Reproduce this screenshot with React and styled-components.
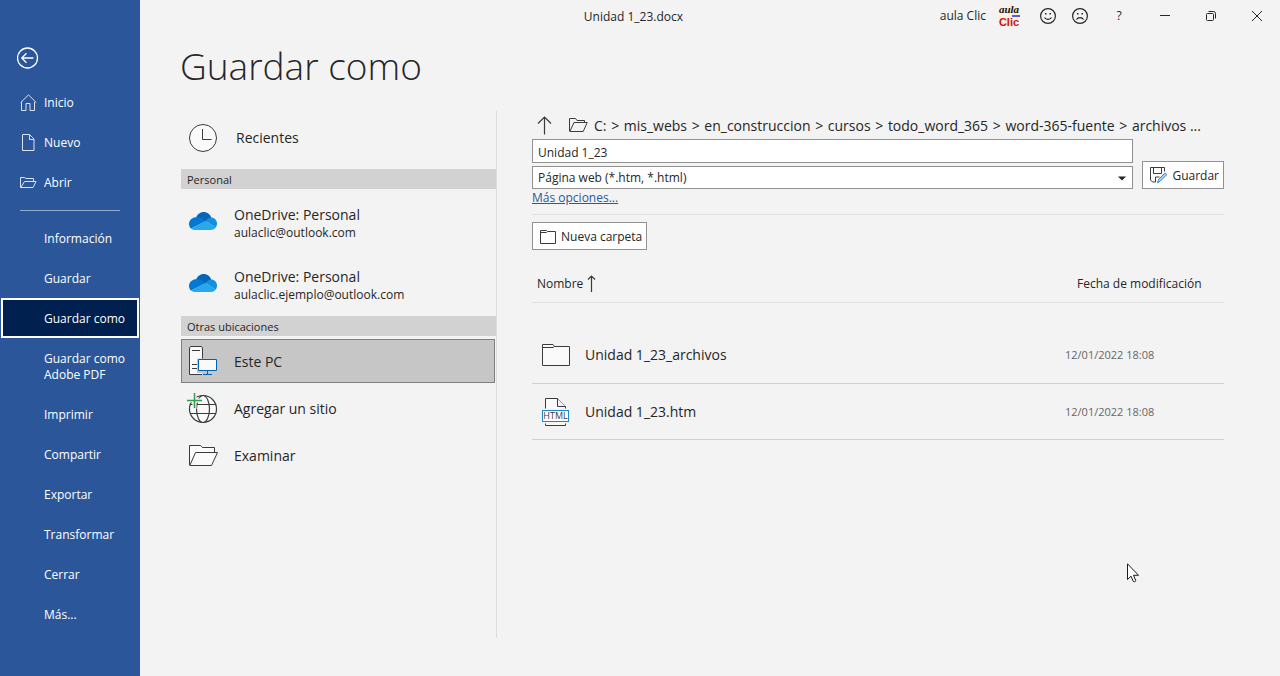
import { Fragment, useState } from 'react';
import styled, { createGlobalStyle } from 'styled-components';

const GlobalStyle = createGlobalStyle`
    * {
        box-sizing: border-box;
    }

    body {
        margin: 0;
        background-color: #f3f3f3;
        color: #262626;
        font-family: "Open Sans", "Noto Sans", sans-serif;
        font-size: 12px;
        line-height: 16px;
    }

    button, input, select {
        font: inherit;
        color: inherit;
    }

    svg {
        display: block;
        flex: none;
    }
`;

const Page = styled.div`
    display: flex;
    min-height: 100vh;
`;

const Sidebar = styled.nav`
    width: 140px;
    flex: none;
    padding-top: 44px;
    background-color: #2b579a;
    color: #fff;
`;

const BackButton = styled.button`
    display: block;
    margin: 0 0 10px 14px;
    padding: 3px;
    border: 0;
    background: none;
`;

const MenuItem = styled.button`
    display: flex;
    align-items: center;
    width: 138px;
    min-height: 40px;
    margin: 0 1px;
    padding: 11px 10px 9px 41px;
    border: 2px solid ${props => props.$active ? '#fff' : 'transparent'};
    background-color: ${props => props.$active ? '#002050' : 'transparent'};
    text-align: left;
`;

const IconMenuItem = styled(MenuItem)`
    gap: 7px;
    padding: 9px 10px 8px 17px;
`;

const Divider = styled.hr`
    width: 100px;
    height: 1px;
    margin: 8px 20px 7px;
    border: 0;
    background-color: #8fabc9;
`;

const Main = styled.main`
    flex: 1;
    min-width: 0;
    display: flex;
    flex-direction: column;
`;

const TitleBar = styled.header`
    display: flex;
    align-items: center;
    height: 32px;
`;

const DocName = styled.div`
    flex: 1;
    padding: 2px 0 0 187px;
    text-align: center;
`;

const User = styled.button`
    display: flex;
    align-items: center;
    gap: 11px;
    padding: 0 11px 0 0;
    border: 0;
    background: none;
`;

const BarButton = styled.button`
    display: flex;
    align-items: center;
    justify-content: center;
    width: ${props => props.$small ? '32px' : '46px'};
    height: 30px;
    padding: 0;
    border: 0;
    background: none;
`;

const Heading = styled.h1`
    margin: 0 0 17px 40px;
    padding-top: 6px;
    font-size: 37px;
    font-weight: 300;
    line-height: 56px;
`;

const Columns = styled.div`
    display: flex;
    flex: 1;
    padding: 0 56px 38px 41px;
`;

const Places = styled.section`
    width: 316px;
    flex: none;
    border-right: 1px solid #dcdcdc;
`;

const GroupTitle = styled.h2`
    margin: 0 0 3px;
    padding: 3px 6px 1px;
    background-color: #d2d2d2;
    font-size: 11px;
    font-weight: 400;
    line-height: 16px;
`;

const Place = styled.button`
    display: flex;
    align-items: center;
    gap: 16px;
    width: calc(100% - 1px);
    height: 44px;
    margin-bottom: 3px;
    padding: 0 7px;
    border: 1px solid ${props => props.$active ? '#7f7f7f' : 'transparent'};
    background-color: ${props => props.$active ? '#c6c6c6' : 'transparent'};
    text-align: left;
`;

const AccountPlace = styled(Place)`
    height: 62px;
    margin-bottom: 0;
`;

const RecentPlace = styled(Place)`
    gap: 18px;
    margin: 5px 0 9px;
`;

const IconSlot = styled.span`
    display: flex;
    justify-content: flex-end;
    width: 29px;
    padding-right: ${props => props.$narrow ? '1px' : '0'};
    flex: none;
`;

const CloudSlot = styled(IconSlot)`
    padding-bottom: 4px;
`;

const PlaceName = styled.span`
    display: block;
    font-size: 14px;
    line-height: 20px;
`;

const PlaceLabel = styled(PlaceName)`
    padding-top: 2px;
`;

const Files = styled.section`
    flex: 1;
    min-width: 0;
    margin-left: 35px;
`;

const PathRow = styled.div`
    display: flex;
    align-items: center;
    gap: 6px;
    height: 28px;
    font-size: 14px;
`;

const UpButton = styled.button`
    margin-right: 11px;
    padding: 0 0 0 5px;
    border: 0;
    background: none;
`;

const PathText = styled.div`
    padding-top: 2px;
    white-space: nowrap;
    overflow: hidden;
    text-overflow: ellipsis;
    line-height: 20px;
`;

const Separator = styled.span`
    padding: 0 1px;
`;

const SaveRow = styled.form`
    display: flex;
    align-items: flex-end;
    gap: 9px;
`;

const Fields = styled.div`
    flex: 1;
    display: flex;
    flex-direction: column;
    gap: 3px;
`;

const NameInput = styled.input`
    width: 100%;
    height: 24px;
    padding: 2px 5px 0;
    border: 1px solid #919191;
    background-color: #fff;
`;

const SelectBox = styled.div`
    position: relative;

    svg {
        position: absolute;
        top: 10px;
        right: 7px;
        pointer-events: none;
    }
`;

const TypeSelect = styled.select`
    display: block;
    width: 100%;
    height: 23px;
    padding: 1px 5px 0;
    border: 1px solid #919191;
    border-radius: 0;
    background-color: #fff;
    appearance: none;
`;

const Button = styled.button`
    display: flex;
    align-items: center;
    gap: 5px;
    height: 28px;
    padding: 1px 4px 0 7px;
    border: 1px solid #919191;
    background-color: #fff;
    white-space: nowrap;
`;

const MoreLink = styled.a`
    display: inline-block;
    padding-top: 1px;
    color: #2b579a;
`;

const Toolbar = styled.div`
    margin-top: 8px;
    padding-top: 7px;
    border-top: 1px solid #e1e1e1;
`;

const FileTable = styled.table`
    width: 100%;
    margin-top: 14px;
    border-collapse: collapse;
    text-align: left;
`;

const HeadCell = styled.th`
    width: ${props => props.$date ? '159px' : 'auto'};
    height: 38px;
    padding: 2px 0 0 ${props => props.$date ? '12px' : '5px'};
    border-bottom: 1px solid #e1e1e1;
    font-weight: 400;
`;

const SortButton = styled.button`
    display: flex;
    align-items: center;
    gap: 4px;
    padding: 0;
    border: 0;
    background: none;
`;

const Spacer = styled.tbody`
    td {
        height: 25px;
        padding: 0;
    }
`;

const Cell = styled.td`
    height: 56px;
    padding: 1px 0 0;
    border-bottom: 1px solid #cfcfcf;
    color: ${props => props.$date ? '#666' : 'inherit'};
    font-size: ${props => props.$date ? '11px' : '14px'};
`;

const FileName = styled.div`
    display: flex;
    align-items: center;
    gap: 15px;
    padding-left: 10px;
`;

const Pointer = styled.svg`
    position: absolute;
    left: 1127px;
    top: 563px;
`;

const line = { fill: 'none', stroke: 'currentColor', strokeWidth: 1 };

const BackIcon = () => (
    <svg width="22" height="22" viewBox="0 0 22 22" {...line} stroke="#fff" strokeWidth="1.3">
        <circle cx="10.500" cy="11" r="10" />
        <path d="M16.500 11H5M9.500 6.300L4.800 11l4.700 4.700" />
    </svg>
);

const HomeIcon = () => (
    <svg width="17" height="17" viewBox="0 0 17 17" {...line} stroke="#dde3ec">
        <path d="M.7 8.600L8.500 .9l7.800 7.700M1.500 8v8.500h4.500V9.500h4v7h4.500V8" />
    </svg>
);

const PageIcon = () => (
    <svg width="17" height="17" viewBox="0 0 17 17" {...line} stroke="#dde3ec">
        <path d="M2.500 .5h7l4.500 4.500v11.500H2.500zM9.500 .5v5h4.500" />
    </svg>
);

const OpenIcon = () => (
    <svg width="17" height="17" viewBox="0 0 17 17" {...line} stroke="#dde3ec">
        <path d="M.5 13.500V3.500h4l1.500 1h7.500v3M.8 13.500L4.500 7.500h11.500l-3 6z" />
    </svg>
);

const ClockIcon = () => (
    <svg width="28" height="28" viewBox="0 0 28 28" {...line} stroke="#3b3b3b">
        <circle cx="14" cy="14" r="13.5" fill="#fafafa" />
        <path d="M13.500 5v10.500h9" />
    </svg>
);

const CloudIcon = () => (
    <svg width="28" height="18" viewBox="0 0 28 18">
        <path fill="#0364b8" d="M7 5.500C8.600 1.900 11.500 0 14.700 0c3.600 0 6.500 2.300 7.500 5.700L17 10 8 6z" />
        <path fill="#0078d4" d="M8.200 5c1.500 0 2.700.4 3.800 1.100l5 3L2 16.500C.8 15.400 0 13.700 0 11.900 0 8 3.500 5 8.200 5z" />
        <path fill="#1490df" d="M22 5.600c3.400 0 6 2.700 6 6.100 0 1.400-.4 2.700-1.200 3.700L16.500 9c1.700-2.200 3.200-3.400 5.500-3.400z" />
        <path fill="#28a8ea" d="M16.500 8.900l10.400 6.400C25.800 17 24 18 22 18H6c-1.600 0-3-.6-4.100-1.500z" />
    </svg>
);

const PcIcon = () => (
    <svg width="28" height="30" viewBox="0 0 28 30" {...line} stroke="#3b3b3b">
        <path fill="#fafafa" d="M.5 28.500V2l1-1.500h11l1 1.500v26.500z" />
        <path d="M3 4.500h8M3 18.500h5M3 22.500h5" />
        <path fill="#c6c6c6" stroke="none" d="M8 12.500h7V30H13v-3H8z" />
        <path fill="#fafafa" stroke="#0063b1" d="M9.500 13.500h18v11h-18zM18.500 24.500v4M14 28.500h9" />
    </svg>
);

const GlobeIcon = () => (
    <svg width="31" height="31" viewBox="0 0 31 31" {...line} stroke="#3b3b3b" strokeWidth="1.200">
        <circle cx="16" cy="16" r="13.500" fill="#fafafa" />
        <ellipse cx="16" cy="16" rx="6.500" ry="13.500" />
        <path d="M4 11.500h24.500M3 20.500h26" />
        <path stroke="#f3f3f3" strokeWidth="4" d="M7.500 0v16M0 7.500h16" />
        <path stroke="#2f9e4f" strokeWidth="1.500" d="M7.500 0v15M0 7.500h15" />
    </svg>
);

const BrowseIcon = () => (
    <svg width="29" height="21" viewBox="0 0 29 21" {...line} stroke="#3b3b3b">
        <path fill="#fafafa" d="M.5 20V.5h11l2 2h12v5" />
        <path fill="#fafafa" d="M.8 20.500L6.500 7.500h22l-6 13z" />
    </svg>
);

const SmallOpenIcon = () => (
    <svg width="19" height="14" viewBox="0 0 19 14" {...line} stroke="#3b3b3b">
        <path d="M.5 13V.5h6l1.500 2h7.500v2M.8 13.500L5 4.500h13.200l-4 9z" />
    </svg>
);

const UpIcon = () => (
    <svg width="15" height="19" viewBox="0 0 15 19" {...line} stroke="#3b3b3b" strokeWidth="1.200">
        <path d="M7.500 18.500V1M1 7.500L7.500 1 14 7.500" />
    </svg>
);

const SortIcon = () => (
    <svg width="9" height="17" viewBox="0 0 9 17" {...line} stroke="#3b3b3b" strokeWidth="1.200">
        <path d="M4.500 17V1M1 4.500L4.500 1 8 4.500" />
    </svg>
);

const SaveIcon = () => (
    <svg width="17" height="17" viewBox="0 0 17 17" {...line} stroke="#3b3b3b">
        <path d="M14.500 4.500V.5H.5v12.500l2 2h3M3.500 .5v6h8v-6M5.500 15v-5h4" />
        <path stroke="#2b88d8" fill="#a9d3f2" d="M7.500 15.800l1-3.300 6-6c1.200-.8 2.500.5 1.700 1.700l-6 6z" />
    </svg>
);

const NewFolderIcon = () => (
    <svg width="16" height="14" viewBox="0 0 16 14" {...line} stroke="#3b3b3b">
        <path d="M.5 13.500V.5h6l1 1h8v12zM.5 2.500h6l1-1" />
    </svg>
);

const FolderIcon = () => (
    <svg width="28" height="22" viewBox="0 0 28 22" {...line} stroke="#3b3b3b">
        <path fill="#fafafa" d="M.5 21.500V.5h10.500l1.500 2h15v19zM.5 3.500h10.500l1.500-1" />
    </svg>
);

const HtmlIcon = () => (
    <svg width="28" height="28" viewBox="0 0 28 28" {...line} stroke="#3b3b3b">
        <path fill="#fafafa" d="M3.500 27.500V.5h12l8 8v19z" />
        <path fill="#f3f3f3" d="M15.500 .5v8h8" />
        <path stroke="#f3f3f3" strokeWidth="2" d="M3 11.500h22M3 24.500h22" />
        <rect x=".5" y="12.500" width="26" height="11" fill="#fff" stroke="#1e88c9" />
        <text x="13.500" y="21" textAnchor="middle" fontSize="9" fill="#3b3b3b" stroke="none">HTML</text>
    </svg>
);

const Logo = () => (
    <svg width="24" height="26" viewBox="0 0 24 26">
        <circle cx="12" cy="12.500" r="11.500" fill="#fdf0e2" />
        <path stroke="#5560d0" strokeWidth="2" d="M15 13h8" />
        <text x="12" y="10" textAnchor="middle" fontSize="11" fontWeight="700" fontStyle="italic" fontFamily="Liberation Serif, serif" fill="#111">aula</text>
        <text x="12" y="23" textAnchor="middle" fontSize="11" fontWeight="700" fontFamily="Liberation Sans, sans-serif" fill="#c41616">Clic</text>
    </svg>
);

const FaceIcon = ({ sad }) => (
    <svg width="16" height="16" viewBox="0 0 16 16" {...line} strokeWidth="1.200">
        <circle cx="8" cy="8" r="7.400" />
        <path d={sad ? 'M4.500 11.500c1.500-2.400 5.500-2.400 7 0' : 'M4.500 9.500c1.500 2.400 5.500 2.400 7 0'} />
        <path fill="currentColor" stroke="none" d="M5 5h1.500v1.500H5zM9.500 5H11v1.500H9.500z" />
    </svg>
);

const MinimizeIcon = () => <svg width="10" height="10" viewBox="0 0 10 10" {...line}><path d="M0 4.500h10" /></svg>;

const RestoreIcon = () => (
    <svg width="10" height="10" viewBox="0 0 10 10" {...line}>
        <rect x=".5" y="2.500" width="7" height="7" rx="1" />
        <path d="M2.500 .5h5a2 2 0 0 1 2 2v5" />
    </svg>
);

const CloseIcon = () => <svg width="10" height="10" viewBox="0 0 10 10" {...line}><path d="M0 0l10 10M10 0L0 10" /></svg>;

const TOP_MENU = [
    { name: 'Inicio', Icon: HomeIcon },
    { name: 'Nuevo', Icon: PageIcon },
    { name: 'Abrir', Icon: OpenIcon }
];

const MENU = [
    'Información', 'Guardar', 'Guardar como', 'Guardar como Adobe PDF', 'Imprimir',
    'Compartir', 'Exportar', 'Transformar', 'Cerrar', 'Más...'
];

const ACCOUNTS = ['aulaclic@outlook.com', 'aulaclic.ejemplo@outlook.com'];

const PLACES = [
    { name: 'Este PC', Icon: PcIcon, narrow: true },
    { name: 'Agregar un sitio', Icon: GlobeIcon },
    { name: 'Examinar', Icon: BrowseIcon }
];

const PATH = ['C:', 'mis_webs', 'en_construccion', 'cursos', 'todo_word_365', 'word-365-fuente', 'archivos ...'];

const FILES = [
    { name: 'Unidad 1_23_archivos', date: '12/01/2022 18:08', Icon: FolderIcon },
    { name: 'Unidad 1_23.htm', date: '12/01/2022 18:08', Icon: HtmlIcon }
];

function App() {

    const [page, setPage] = useState('Guardar como');
    const [place, setPlace] = useState('Este PC');
    const [fileName, setFileName] = useState('Unidad 1_23');

    return (
        <Page>
            <GlobalStyle />
            <Sidebar>
                <BackButton aria-label="Atrás"><BackIcon /></BackButton>
                {TOP_MENU.map(({ name, Icon }) => (
                    <IconMenuItem key={name}><Icon />{name}</IconMenuItem>
                ))}
                <Divider />
                {MENU.map(name => (
                    <MenuItem key={name} $active={name === page} onClick={() => setPage(name)}>{name}</MenuItem>
                ))}
            </Sidebar>
            <Main>
                <TitleBar>
                    <DocName>Unidad 1_23.docx</DocName>
                    <User>aula Clic<Logo /></User>
                    <BarButton $small aria-label="Me gusta"><FaceIcon /></BarButton>
                    <BarButton $small aria-label="No me gusta"><FaceIcon sad /></BarButton>
                    <BarButton>?</BarButton>
                    <BarButton aria-label="Minimizar"><MinimizeIcon /></BarButton>
                    <BarButton aria-label="Restaurar"><RestoreIcon /></BarButton>
                    <BarButton aria-label="Cerrar ventana"><CloseIcon /></BarButton>
                </TitleBar>
                <Heading>Guardar como</Heading>
                <Columns>
                    <Places>
                        <RecentPlace>
                            <IconSlot $narrow><ClockIcon /></IconSlot>
                            <PlaceName>Recientes</PlaceName>
                        </RecentPlace>
                        <GroupTitle>Personal</GroupTitle>
                        {ACCOUNTS.map(mail => (
                            <AccountPlace key={mail}>
                                <CloudSlot $narrow><CloudIcon /></CloudSlot>
                                <span><PlaceName>OneDrive: Personal</PlaceName>{mail}</span>
                            </AccountPlace>
                        ))}
                        <GroupTitle>Otras ubicaciones</GroupTitle>
                        {PLACES.map(({ name, Icon, narrow }) => (
                            <Place key={name} $active={name === place} onClick={() => setPlace(name)}>
                                <IconSlot $narrow={narrow}><Icon /></IconSlot>
                                <PlaceLabel>{name}</PlaceLabel>
                            </Place>
                        ))}
                    </Places>
                    <Files>
                        <PathRow>
                            <UpButton aria-label="Subir un nivel"><UpIcon /></UpButton>
                            <SmallOpenIcon />
                            <PathText>
                                {PATH.map((folder, index) => (
                                    <Fragment key={folder}>
                                        {index > 0 && <Separator> &gt; </Separator>}
                                        {folder}
                                    </Fragment>
                                ))}
                            </PathText>
                        </PathRow>
                        <SaveRow onSubmit={event => event.preventDefault()}>
                            <Fields>
                                <NameInput
                                    aria-label="Nombre de archivo"
                                    value={fileName}
                                    onChange={event => setFileName(event.target.value)}
                                />
                                <SelectBox>
                                    <TypeSelect aria-label="Tipo de archivo">
                                        <option>Página web (*.htm, *.html)</option>
                                    </TypeSelect>
                                    <svg width="8" height="5" viewBox="0 0 8 5"><path fill="#262626" d="M0 .5h8L4 4.500z" /></svg>
                                </SelectBox>
                            </Fields>
                            <Button><SaveIcon />Guardar</Button>
                        </SaveRow>
                        <MoreLink href="#opciones">Más opciones...</MoreLink>
                        <Toolbar>
                            <Button><NewFolderIcon />Nueva carpeta</Button>
                        </Toolbar>
                        <FileTable>
                            <thead>
                                <tr>
                                    <HeadCell><SortButton>Nombre<SortIcon /></SortButton></HeadCell>
                                    <HeadCell $date>Fecha de modificación</HeadCell>
                                </tr>
                            </thead>
                            <Spacer><tr><td colSpan={2} /></tr></Spacer>
                            <tbody>
                                {FILES.map(({ name, date, Icon }) => (
                                    <tr key={name}>
                                        <Cell><FileName><Icon />{name}</FileName></Cell>
                                        <Cell $date>{date}</Cell>
                                    </tr>
                                ))}
                            </tbody>
                        </FileTable>
                    </Files>
                </Columns>
            </Main>
            <Pointer width="13" height="20" viewBox="0 0 13 20">
                <path fill="#fff" stroke="#1b1b26" d="M.5 .8v15.700l3.500-3.300 2.300 5.200c.8 1 2.700.2 2.400-1.100L6.500 12.300h5z" />
            </Pointer>
        </Page>
    );
}

export default App;
